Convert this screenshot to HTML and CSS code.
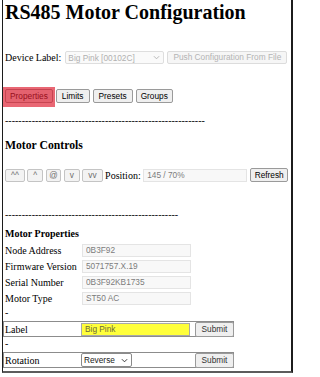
FILE: index.html
```html
<!DOCTYPE html>
<html>
<head>
<meta charset="utf-8">
<title>RS485 Motor Configuration</title>
<link rel="stylesheet" href="styles.css">
</head>
<body>
<div class="page">
  <h1 class="title">RS485 Motor Configuration</h1>

  <div class="device-row">
    <span class="text">Device Label:</span>
    <span class="select select-device is-disabled">Big Pink [00102C]<svg class="chev" viewBox="0 0 8 5" width="7" height="5"><path d="M1 1 L4 4 L7 1" fill="none" stroke="currentColor" stroke-width="1"/></svg></span>
    <button class="btn btn-push" disabled>Push Configuration From File</button>
  </div>

  <div class="tabs">
    <span class="highlight"><button class="btn">Properties</button></span>
    <button class="btn btn-tab">Limits</button>
    <button class="btn btn-tab">Presets</button>
    <button class="btn">Groups</button>
  </div>

  <div class="dashes dashes-1">------------------------------------------------------------</div>

  <h3 class="section-title">Motor Controls</h3>

  <div class="controls">
    <button class="btn btn-ctl is-soft">^^</button>
    <button class="btn btn-ctl is-soft">^</button>
    <button class="btn btn-ctl btn-at is-soft">@</button>
    <button class="btn btn-ctl is-soft">v</button>
    <button class="btn btn-ctl is-soft">vv</button>
    <span class="text pos-label">Position:</span>
    <input class="field field-ro field-pos" value="145 / 70%" readonly>
    <button class="btn btn-refresh">Refresh</button>
  </div>

  <div class="dashes dashes-2">----------------------------------------------------</div>

  <h4 class="sub-title">Motor Properties</h4>

  <div class="props">
    <div class="prow"><span class="plabel">Node Address</span><input class="field field-ro" value="0B3F92" readonly></div>
    <div class="prow"><span class="plabel">Firmware Version</span><input class="field field-ro" value="5071757.X.19" readonly></div>
    <div class="prow"><span class="plabel">Serial Number</span><input class="field field-ro" value="0B3F92KB1735" readonly></div>
    <div class="prow"><span class="plabel">Motor Type</span><input class="field field-ro" value="ST50 AC" readonly></div>
    <div class="sep">-</div>
    <div class="prow prow-edit"><span class="plabel">Label</span><input class="field field-label" value="Big Pink"><button class="btn btn-submit">Submit</button></div>
    <div class="sep">-</div>
    <div class="prow prow-edit"><span class="plabel">Rotation</span><span class="select select-rot">Reverse<svg class="chev" viewBox="0 0 8 5" width="7" height="5"><path d="M1 1 L4 4 L7 1" fill="none" stroke="currentColor" stroke-width="1"/></svg></span><button class="btn btn-submit">Submit</button></div>
  </div>
</div>
</body>
</html>
```

FILE: styles.css
```css
html, body {
  margin: 0;
  padding: 0;
  background: #ffffff;
}

body {
  font-family: "Liberation Serif", "Times New Roman", serif;
  font-size: 10px;
  color: #000;
}

.page {
  margin-left: 2px;
  width: 286px;
  height: 371px;
  padding-left: 2px;
  border-left: 1px solid #1c1c1c;
  border-right: 2px solid #1c1c1c;
  border-bottom: 2px solid #5c5c5c;
  overflow: hidden;
}

.title {
  margin: 0;
  font-size: 20px;
  line-height: 24px;
  font-weight: bold;
  white-space: nowrap;
}

.text {
  line-height: 13px;
  white-space: nowrap;
}

.btn {
  font-family: "Liberation Sans", Arial, sans-serif;
  font-size: 8.3px;
  line-height: 11px;
  height: 14px;
  padding: 0 4px;
  margin: 0;
  color: #000;
  background: #efefef;
  border: 1px solid #9a9a9a;
  border-radius: 2px;
  box-sizing: border-box;
  white-space: nowrap;
}

.btn:disabled {
  color: #b4b4b4;
  background: #f6f6f6;
  border-color: #dcdcdc;
}

.select {
  display: inline-flex;
  align-items: center;
  justify-content: space-between;
  box-sizing: border-box;
  font-family: "Liberation Sans", Arial, sans-serif;
  font-size: 8.3px;
  height: 13px;
  padding: 0 3px 0 2px;
  border: 1px solid #8a8a8a;
  border-radius: 2px;
  background: #fff;
  color: #000;
}

.select.is-disabled {
  color: #b0b0b0;
  border-color: #dedede;
  background: #fafafa;
}

.chev {
  display: block;
  flex: none;
}

.device-row {
  display: flex;
  align-items: center;
  margin-top: 27px;
  height: 13px;
}

.select-device {
  width: 99px;
  margin-left: 4px;
}

.btn-push {
  margin-left: 3px;
  width: 120px;
  height: 13px;
}

.tabs {
  display: flex;
  align-items: center;
  gap: 3px;
  margin-top: 25px;
  height: 14px;
}

.btn-tab {
  padding: 0 5px;
}

.highlight {
  position: relative;
  display: inline-flex;
}

.highlight::after {
  content: "";
  position: absolute;
  left: -5px;
  right: -2px;
  top: -2px;
  bottom: -4px;
  background: rgba(222, 24, 44, 0.66);
  pointer-events: none;
}

.dashes {
  line-height: 12px;
  white-space: nowrap;
  letter-spacing: 0;
}

.dashes-1 {
  margin-top: 12px;
}

.dashes-2 {
  margin-top: 27px;
}

.section-title {
  margin: 12px 0 0;
  font-size: 11.7px;
  line-height: 14px;
  font-weight: bold;
}

.controls {
  display: flex;
  align-items: center;
  gap: 2.5px;
  margin-top: 15px;
  height: 14px;
}

.btn-ctl {
  padding: 0 5px;
  height: 13px;
}

.btn-at {
  padding: 0 2.5px;
}

.btn.is-soft {
  color: #6e6e6e;
  border-color: #c4c4c4;
  background: #f3f3f3;
}

.pos-label {
  margin-left: 0;
}

.field {
  box-sizing: border-box;
  height: 13px;
  width: 109px;
  margin: 0;
  padding: 0 3px;
  font-family: "Liberation Sans", Arial, sans-serif;
  font-size: 8.3px;
  border: 1px solid #8a8a8a;
  border-radius: 0;
  outline: none;
}

.field-ro {
  background: #f8f8f8;
  border-color: #e4e4e4;
  color: #7c7c7c;
}

.field-pos {
  width: 104px;
}

.btn-refresh {
  height: 14px;
  width: 38px;
}

.sub-title {
  margin: 7px 0 0;
  font-size: 10px;
  line-height: 12px;
  font-weight: bold;
}

.props {
  margin-top: 2px;
  margin-left: -2px;
}

.prow {
  display: flex;
  align-items: center;
  height: 16px;
  box-sizing: border-box;
}

.plabel {
  width: 77px;
  padding-left: 2px;
  flex: none;
  white-space: nowrap;
}

.sep {
  height: 14px;
  line-height: 14px;
  padding-left: 2px;
}

.prow-edit {
  width: 231px;
  height: 16px;
  border: 1px solid #8c8c8c;
  margin-top: 1px;
}

.prow-edit .plabel {
  width: 76px;
  padding-left: 1px;
}

.field-label {
  background: #ffff3a;
  color: #6a6a3a;
  border-color: #a8a8a8;
}

.select-rot {
  width: 51px;
  height: 14px;
  color: #222;
}

.btn-submit {
  margin-left: auto;
  width: 39px;
  height: 15px;
  margin-right: -1px;
  color: #333;
}
```
